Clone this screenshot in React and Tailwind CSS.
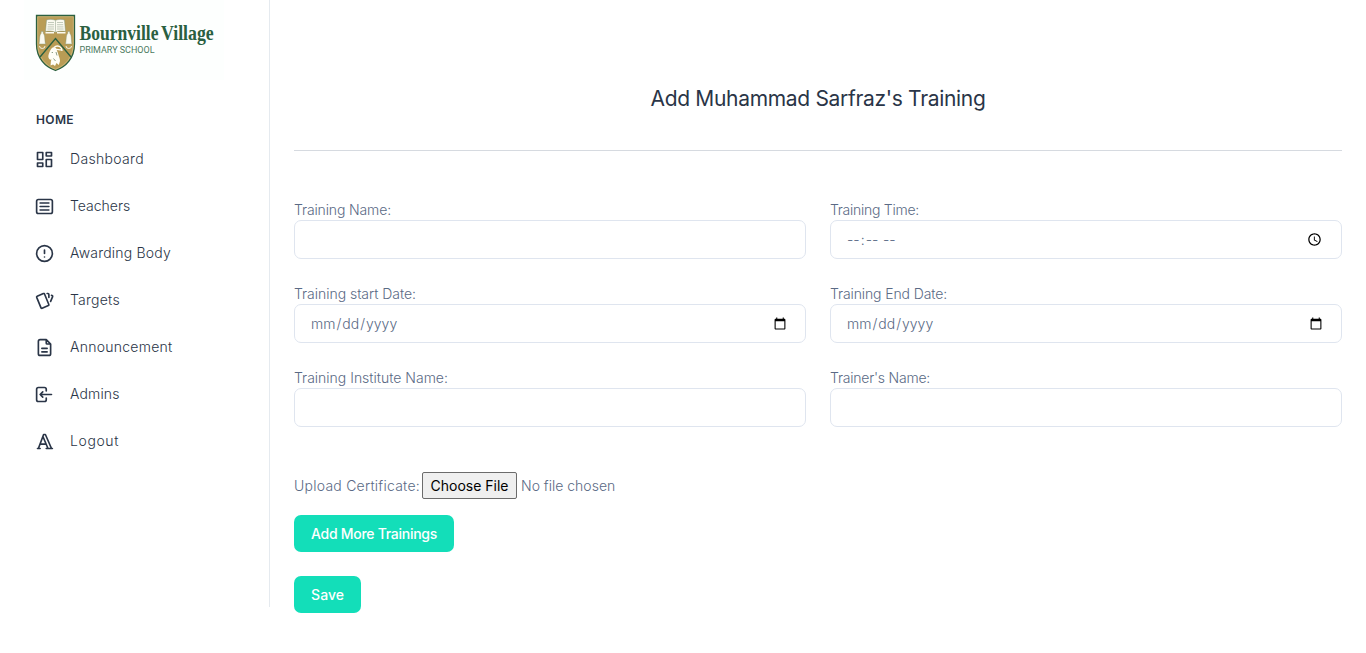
import React from "react";

const navItems = [
  {
    label: "Dashboard",
    tracking: "tracking-[0.33px]",
    icon: "M4 4h6v8h-6z M4 16h6v4h-6z M14 12h6v8h-6z M14 4h6v4h-6z",
  },
  {
    label: "Teachers",
    tracking: "tracking-[0px]",
    icon: "M5 4h14a2 2 0 0 1 2 2v12a2 2 0 0 1 -2 2h-14a2 2 0 0 1 -2 -2v-12a2 2 0 0 1 2 -2z M7 8h10 M7 12h10 M7 16h10",
  },
  {
    label: "Awarding Body",
    tracking: "tracking-[0.2px]",
    icon: "M3 12a9 9 0 1 0 18 0a9 9 0 0 0 -18 0 M12 8v4 M12 16h.01",
  },
  {
    label: "Targets",
    tracking: "tracking-[0.24px]",
    icon: "M3.604 7.197l7.138 -3.109a.96 .96 0 0 1 1.27 .527l4.924 11.902a1 1 0 0 1 -.514 1.304l-7.137 3.109a.96 .96 0 0 1 -1.271 -.527l-4.924 -11.903a1 1 0 0 1 .514 -1.304z M15 4h1a1 1 0 0 1 1 1v3.5 M20 6c.264 .112 .52 .217 .768 .315a1 1 0 0 1 .53 1.311l-2.298 5.374",
  },
  {
    label: "Announcement",
    tracking: "tracking-[0.26px]",
    icon: "M14 3v4a1 1 0 0 0 1 1h4 M17 21h-10a2 2 0 0 1 -2 -2v-14a2 2 0 0 1 2 -2h7l5 5v11a2 2 0 0 1 -2 2z M9 17h6 M9 13h6",
  },
  {
    label: "Admins",
    tracking: "tracking-[0.15px]",
    icon: "M14 8v-2a2 2 0 0 0 -2 -2h-7a2 2 0 0 0 -2 2v12a2 2 0 0 0 2 2h7a2 2 0 0 0 2 -2v-2 M20 12h-13l3 -3m0 6l-3 -3",
  },
  {
    label: "Logout",
    tracking: "tracking-[0.6px]",
    icon: "M4 20h3 M14 20h7 M6.9 15h6.9 M10.2 6.3l5.8 13.7 M5 20l6 -16h2l7 16",
  },
];

const fields = [
  { label: "Training Name:", type: "text", tracking: "tracking-[-0.13px]" },
  { label: "Training Time:", type: "time", tracking: "tracking-[-0.26px]" },
  { label: "Training start Date:", type: "date", tracking: "tracking-[-0.03px]" },
  { label: "Training End Date:", type: "date", tracking: "tracking-[-0.11px]" },
  { label: "Training Institute Name:", type: "text", tracking: "tracking-[0px]" },
  { label: "Trainer's Name:", type: "text", tracking: "tracking-[-0.22px]" },
];

function Logo() {
  return (
    <svg width="200" height="80" viewBox="0 0 200 80" role="img" aria-label="Bournville Village Primary School">
      <rect width="200" height="80" fill="#fdfffe" />
      {/* shield */}
      <path d="M12.5 15.5H50.5V44C50.500 58 42 67 31.500 70.500C21 67 12.500 58 12.500 44Z" fill="#b99c55" stroke="#2b6040" strokeWidth="1.300" />
      <path d="M13.700 16.700H49.300V44C49.300 57 41 66 31.500 69.200C22 66 13.700 57 13.700 44Z" fill="none" stroke="#dccb97" strokeWidth="0.500" />
      {/* chevron */}
      <path d="M16 57L31.500 38.500L47 57" fill="none" stroke="#2b6040" strokeWidth="1.400" />
      {/* open book */}
      <path d="M22.500 20C25.500 19 28.500 19.200 31.500 20.300C34.500 19.200 37.500 19 40.500 20L41.500 31.500C38 30.800 34.500 31 31.500 32.300C28.500 31 25 30.800 21.500 31.500Z" fill="#fbfaf0" stroke="#7f9377" strokeWidth="0.500" />
      <path d="M31.500 20.300V32M24 22.500H30M23.800 24.700H30M23.600 26.900H30M23.400 29H30M33 22.500H39M33 24.700H39.200M33 26.900H39.400M33 29H39.600" stroke="#a9b5a2" strokeWidth="0.700" />
      <path d="M21.500 32.800H30M33 32.800H41.500" stroke="#fbfaf0" strokeWidth="1.600" />
      {/* bells */}
      <path d="M17.200 31.500H19.200V33.500C21.200 34.500 20.500 40 21.500 44H15C16 40 15.200 34.500 17.200 33.500Z" fill="#fbfaf0" stroke="#7f9377" strokeWidth="0.400" />
      <path d="M43.800 31.500H45.800V33.500C47.800 34.500 47 40 48 44H41.500C42.500 40 41.800 34.500 43.800 33.500Z" fill="#fbfaf0" stroke="#7f9377" strokeWidth="0.400" />
      <path d="M15.500 46A2 1.800 0 1 0 21 46M42 46A2 1.800 0 1 0 47.500 46" fill="none" stroke="#fbfaf0" strokeWidth="0.900" />
      {/* goat head */}
      <path d="M24.500 57.500C24 55.500 25.500 51 27.500 48.500C28.500 47.300 30.500 46.800 31.800 47.800C32.800 50 34 53 34.500 55C35 57 36 58.500 36 61L34.800 65L32.500 63L31 66L29 64.500L26.500 65.500C27 63 26.500 61 27.500 59.500C26 60 24.800 59 24.500 57.500Z" fill="#fffef7" />
      <path d="M30 47.500C31.500 46 33.500 45.600 35.500 46.500C37 47.300 38 49 38 51M31.500 49.500C33.500 49 35 50 38 49.800" fill="none" stroke="#fffef7" strokeWidth="1.300" />
      <path d="M27.700 52.500H29M32 52L33 55.500M29.500 58.500L31.500 61" stroke="#5c7656" strokeWidth="0.700" />
      <g fontFamily="Liberation Serif, serif" fontWeight="700" fontSize="22" fill="#2a6041">
        <text transform="translate(55.5 39.5) scale(0.798 1)">Bournville</text>
        <text transform="translate(137 39.5) scale(0.81 1)">Village</text>
      </g>
      <text x="55.500" y="53" textLength="75" lengthAdjust="spacingAndGlyphs" fontFamily="Roboto, sans-serif" fontWeight="400" fontSize="9.800" fill="#4b7a5e">
        PRIMARY SCHOOL
      </text>
    </svg>
  );
}

function Sidebar() {
  return (
    <aside className="h-[607px] w-[270px] shrink-0 border-r border-[#e5eaef] pl-6">
      <Logo />
      <h2 className="mt-[31px] pl-3 text-xs leading-[18px] font-semibold tracking-[0.37px] text-[#2a3547]">HOME</h2>
      <ul className="mt-[6px]">
        {navItems.map((item) => (
          <li key={item.label} className="flex h-[47px] items-center gap-[15px] pl-[10px] text-[#2a3547]">
            <svg
              className="mt-px size-[21px]"
              viewBox="0 0 24 24"
              fill="none"
              stroke="currentColor"
              strokeWidth="1.9"
              strokeLinecap="round"
              strokeLinejoin="round"
            >
              <path d={item.icon} />
            </svg>
            <span className={`text-sm font-light ${item.tracking}`}>{item.label}</span>
          </li>
        ))}
      </ul>
    </aside>
  );
}

function Field({ label, type, tracking }) {
  return (
    <label className="block">
      <span className={`block leading-[21px] ${tracking}`}>{label}</span>
      <input
        type={type}
        className={`block h-[39px] w-full rounded-[7px] border border-[#dfe5ef] bg-transparent py-2 pr-4 pl-[15px] leading-[21px] ${type === "time" ? "tracking-[0.5px]" : ""}`}
      />
    </label>
  );
}

export default function App() {
  return (
    <div className="flex h-[653px] overflow-hidden bg-white font-['Inter',sans-serif] text-sm font-light text-[#5a6a85]">
      <Sidebar />
      <main className="flex-1 px-6 pt-[85px]">
        <h1 className="text-center text-[21px] leading-7 font-normal tracking-[-0.32px] text-[#2a3547]">
          Add Muhammad Sarfraz's Training
        </h1>
        <hr className="mt-[37px] border-[#d6dae0]" />
        <form className="mt-[48px]">
          <div className="grid grid-cols-2 gap-6">
            {fields.map((field) => (
              <Field key={field.label} {...field} />
            ))}
          </div>
          <div className="mt-[45px] flex h-[27px] items-center">
            <label htmlFor="certificate" className="w-32 tracking-[0.24px]">Upload Certificate:</label>
            <input
              id="certificate"
              type="file"
              className="h-[27px] file:mr-1 file:h-[27px] file:w-[95px] file:rounded-[2px] file:border file:border-solid file:border-[#6b6b6b] file:bg-[#efefef] file:p-0 file:font-normal file:text-black"
            />
          </div>
          <button type="button" className="mt-4 block h-[37px] w-40 rounded-[7px] bg-[#13deb9] font-medium tracking-[-0.28px] text-white">
            Add More Trainings
          </button>
          <button type="button" className="mt-6 block h-[37px] w-[67px] rounded-[7px] bg-[#13deb9] font-medium text-white">
            Save
          </button>
        </form>
      </main>
    </div>
  );
}
